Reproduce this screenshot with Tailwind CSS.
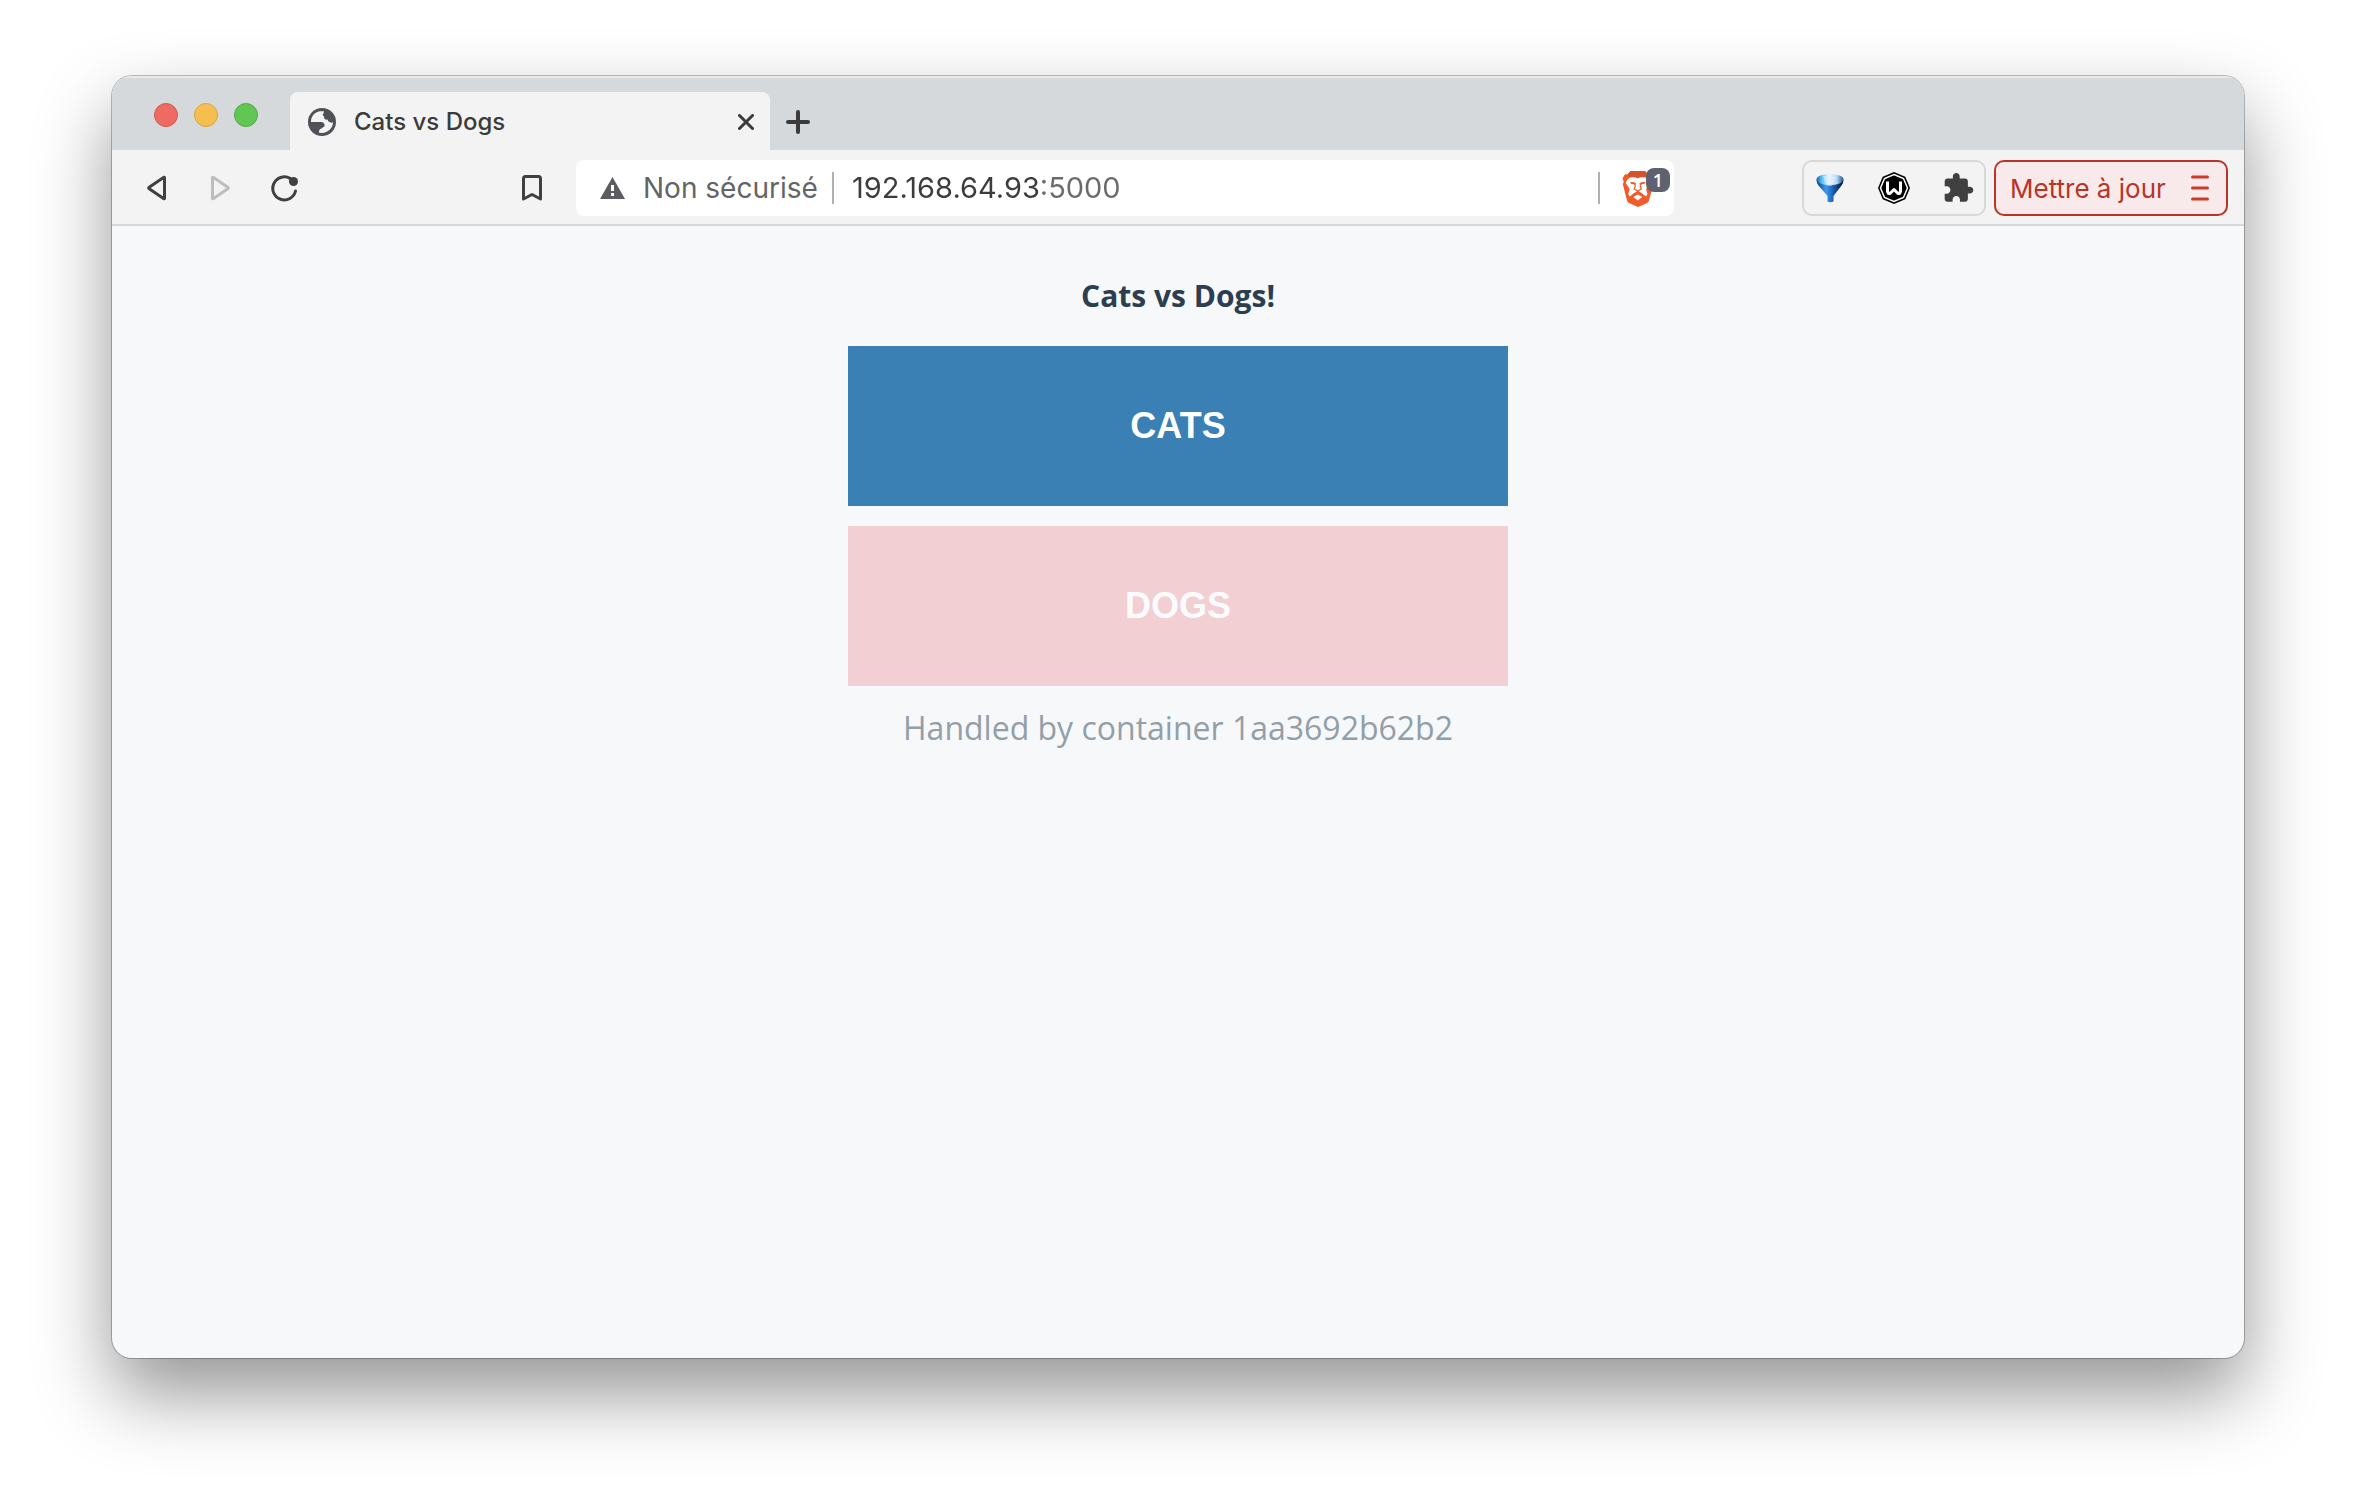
<!DOCTYPE html>
<html lang="fr">
<head>
<meta charset="utf-8">
<title>Cats vs Dogs</title>
<script src="https://cdn.jsdelivr.net/npm/@tailwindcss/browser@4"></script>
</head>
<body class="flex min-h-screen flex-col bg-white px-28 pt-19 pb-37 font-[Inter,sans-serif]">
<div class="flex flex-1 flex-col overflow-hidden rounded-[20px] bg-[#f7f8fa] shadow-[0_0_0_1px_rgba(0,0,0,0.25),0_36px_76px_rgba(0,0,0,0.42)]">

  <!-- Tab strip -->
  <header class="flex h-[74px] items-end bg-[#d5d9dc] pl-[42px] shadow-[inset_0_2px_0_#e8eaec]">
    <div class="flex gap-4 self-center pt-1">
      <button aria-label="Fermer la fenêtre" class="size-6 rounded-full border border-[#d9574c] bg-[#ed6b60]"></button>
      <button aria-label="Réduire" class="size-6 rounded-full border border-[#dba53f] bg-[#f5bf4f]"></button>
      <button aria-label="Agrandir" class="size-6 rounded-full border border-[#53a944] bg-[#62c655]"></button>
    </div>
    <div class="ml-8 flex h-[58px] w-[480px] items-center rounded-t-lg bg-[#f3f3f3] pt-0.5 pr-4 pl-[18px]">
      <svg class="size-7" viewBox="0 0 28 28" aria-hidden="true">
        <circle cx="14" cy="14" r="14" fill="#505156"/>
        <path fill="#f3f3f3" d="M3 14C3 9 6 5 10.500 3.600C12 3.200 14 3 16 3.300L15.500 5.500C14.500 6 14.600 7.500 16 8.500C16 11 17.500 12 19.500 11.600C20 14 22 15 25 14.500C24.800 20 20 24.800 14 25C12.500 25 11.500 24.800 11 24.500C11 22 11.600 21 13.500 20.600C14.500 20 14.800 19 16.500 18.500C17 15.500 15.500 14 13 14Z"/>
      </svg>
      <span class="ml-[18px] flex-1 text-2xl font-medium text-[#3b3b3b]">Cats vs Dogs</span>
      <button aria-label="Fermer l’onglet">
        <svg class="size-4" viewBox="0 0 16 16" fill="none" stroke="#3b3b3b" stroke-width="3" stroke-linecap="round"><path d="M1.500 1.500l13 13M14.500 1.500l-13 13"/></svg>
      </button>
    </div>
    <button aria-label="Nouvel onglet" class="ml-4 flex h-14 items-center">
      <svg class="size-6" viewBox="0 0 24 24" fill="none" stroke="#3b3b3b" stroke-width="4" stroke-linecap="round"><path d="M12 2v20M2 12h20"/></svg>
    </button>
  </header>

  <!-- Toolbar -->
  <nav class="flex h-19 items-center border-b-2 border-[#d5d7da] bg-[#f3f3f3] pt-0.5 pr-4 pl-[34px]">
    <button aria-label="Précédent">
      <svg class="h-7 w-6" viewBox="0 0 24 28" fill="none" stroke="#404040" stroke-width="3" stroke-linejoin="round"><path d="M18.500 3.500v21q0 .5-.6.200L3.200 14.800q-1-.8 0-1.600L17.900 3.300q.6-.3.6.2z"/></svg>
    </button>
    <button aria-label="Suivant" class="ml-10" disabled>
      <svg class="h-7 w-6" viewBox="0 0 24 28" fill="none" stroke="#bebebe" stroke-width="3" stroke-linejoin="round"><path d="M2.500 3.500v21q0 .5.6.200L17.800 14.800q1-.8 0-1.600L3.100 3.300q-.6-.3-.6.2z"/></svg>
    </button>
    <button aria-label="Actualiser" class="ml-9">
      <svg class="size-7" viewBox="0 0 28 28" fill="none" stroke="#404040" stroke-width="3" stroke-linecap="round"><path d="M20 4.400A11.500 11.500 0 1 0 25.500 17"/><circle cx="23.500" cy="7.500" r="4.500" fill="#404040" stroke="none"/></svg>
    </button>
    <button aria-label="Ajouter aux favoris" class="ml-56">
      <svg class="h-[26px] w-5" viewBox="0 0 20 26" fill="none" stroke="#404040" stroke-width="3" stroke-linejoin="round"><path d="M1.500 24V3.500q0-2 2-2h13q2 0 2 2V24L10 19.500z"/></svg>
    </button>

    <form class="ml-[34px] flex h-14 w-[1098px] items-center rounded-lg bg-white pr-1 pl-6 text-[28px]">
      <svg class="h-[22px] w-[25px]" viewBox="0 0 25 22" aria-hidden="true"><path fill="#5c5d60" d="M12.500 0L25 22H0z"/><path fill="#fff" d="M11 8h3v6h-3zM11 16h3v3h-3z"/></svg>
      <label for="address" class="ml-[18px] w-[172px] whitespace-nowrap text-[#636466]">Non sécurisé</label>
      <span class="ml-[17px] h-8 w-0.5 bg-[#b0b0b0]"></span>
      <input id="address" type="text" value="192.168.64.93:5000" class="ml-[18px] min-w-0 flex-1 bg-[linear-gradient(to_right,#3c3c3c_190px,#6b6b6b_190px)] bg-clip-text text-[29px] text-transparent outline-none">
      <span class="h-8 w-0.5 bg-[#b0b0b0]"></span>
      <button type="button" aria-label="Brave Shields" class="relative ml-[22px] h-10 w-12">
        <svg class="mt-0.5 h-9 w-8" viewBox="0 0 32 36">
          <path fill="#f15a29" d="M8.500 0h14.500l3 3.500 3-.2 2 4.200-1 3.500 1 3-4 15.500q-.5 1.500-2 2.500L16 36l-9-4q-1.500-1-2-2.500L.8 13l1-2-1.300-3.500 2.500-4.200 3 .2z"/>
          <path fill="#d9512a" d="M8.500 0h14.500l3 3.500-1.500 2.500H7L5.500 3.500z"/>
          <path fill="#fff" d="M8 6.500q4-.8 7.800.8 3.800-1.600 7.800-.8 3.600 2 4.400 5.500l-4 6 1.500 5-1.500 2.500-4.800-3.700-3.400-1.800-3.300 1.800-4.800 3.700L6.200 23l1.500-5-4-6Q4.500 8.500 8 6.500z"/>
          <path fill="#f15a29" d="M8 11q4-.4 6 1.200l-.6 3.800-1.200-2.600-3.200-.6zM23.500 11q-4-.4-6 1.200l.6 3.800 1.200-2.600 3.200-.6z"/>
          <path fill="none" stroke="#f15a29" stroke-width="1.300" d="M13.400 15l-1.100 3 3.500 2 3.500-2-1.100-3M15.800 20v2.500M11.500 24l4.300-2 4.300 2"/>
          <path fill="#fff" d="M15.800 23.500l4.500 2.500-4.500 3.500-4.500-3.500z"/>
        </svg>
        <span class="absolute top-0 right-0 flex size-6 items-center justify-center rounded-lg bg-[#5f616e] font-['Open_Sans',sans-serif] text-lg font-semibold text-white">1</span>
      </button>
    </form>

    <div class="ml-auto flex h-14 w-46 items-center gap-[34px] rounded-[10px] border-2 border-[#d8d8d8] pl-3">
      <button aria-label="Filtre">
        <svg class="h-8 w-7" viewBox="0 0 28 32">
          <defs>
            <linearGradient id="cone"><stop offset="0" stop-color="#0b3a7c"/><stop offset=".35" stop-color="#3d9cf0"/><stop offset=".6" stop-color="#1d62b8"/><stop offset="1" stop-color="#06101f"/></linearGradient>
            <linearGradient id="rim"><stop offset="0" stop-color="#1a5da5"/><stop offset=".2" stop-color="#54c3fb"/><stop offset=".45" stop-color="#eef8ff"/><stop offset=".75" stop-color="#b5daf8"/><stop offset="1" stop-color="#1c4c90"/></linearGradient>
          </defs>
          <path fill="url(#cone)" d="M.5 8h27q0 3-2 5.500L17.500 24v5.500q-3.500 1.500-6 0V24L2.500 13.500Q.5 11 .5 8z"/>
          <ellipse cx="14" cy="7.500" rx="13.500" ry="5.500" fill="url(#rim)"/>
          <path fill="#dceffd" d="M7 4l4 9.500q3 1 6-.5L20 5z" opacity=".6"/>
        </svg>
      </button>
      <button aria-label="Extension W">
        <svg class="size-8" viewBox="0 0 32 32">
          <path d="M16 0l11.300 4.700L32 16l-4.700 11.300L16 32 4.700 27.300 0 16 4.700 4.700z"/>
          <path fill="none" stroke="#fff" stroke-width="1.500" d="M16 2.500l9.500 4L29.500 16l-4 9.500-9.500 4-9.500-4-4-9.500 4-9.500z"/>
          <path fill="none" stroke="#fff" stroke-width="3" stroke-linejoin="round" d="M9.500 9.500V19.500L10.500 21.500H12L16 17.500 20 21.500H21.500L22.500 19.500V9.500"/>
        </svg>
      </button>
      <button aria-label="Extensions">
        <svg class="size-[30px]" viewBox="1.500 1 22 22" fill="#404040"><path d="M20.500 11H19V7c0-1.100-.9-2-2-2h-4V3.500C13 2.120 11.880 1 10.500 1S8 2.120 8 3.500V5H4c-1.100 0-1.990.9-1.990 2v3.800H3.500c1.490 0 2.700 1.210 2.700 2.700s-1.210 2.700-2.700 2.700H2V20c0 1.100.9 2 2 2h3.800v-1.500c0-1.490 1.210-2.700 2.700-2.700 1.490 0 2.700 1.210 2.700 2.700V22H17c1.100 0 2-.9 2-2v-4h1.500c1.380 0 2.500-1.120 2.500-2.500S21.880 11 20.500 11z"/></svg>
      </button>
    </div>
    <button class="ml-2 flex h-14 w-[234px] items-center justify-between rounded-[10px] border-2 border-[#b93428] bg-[#f8eaea] pr-[17px] pl-3.5 text-[26px] whitespace-nowrap text-[#b93428]">
      Mettre à jour
      <svg class="h-7 w-[18px]" viewBox="0 0 18 28" fill="none" stroke="#cb3a2b" stroke-width="3" stroke-linecap="round"><path d="M1.500 3h15M1.500 14h15M1.500 25h15"/></svg>
    </button>
  </nav>

  <!-- Voting page -->
  <main class="mx-auto flex w-[660px] flex-col pt-[46px] text-center font-['Open_Sans',sans-serif]">
    <h1 class="text-[30px] leading-12 font-bold text-[#2c3e50]">Cats vs Dogs!</h1>
    <form class="mt-[26px] flex flex-col gap-5 font-['Liberation_Sans',Arial,sans-serif] text-4xl font-bold text-white">
      <button type="button" class="h-40 bg-[#3b80b5]">CATS</button>
      <button type="button" class="h-40 bg-[#f2cfd3] text-[#fafbfc]" disabled>DOGS</button>
    </form>
    <p class="mt-[18px] text-[32px] leading-12 text-[#939fa8]">Handled by container 1aa3692b62b2</p>
  </main>
</div>
</body>
</html>
